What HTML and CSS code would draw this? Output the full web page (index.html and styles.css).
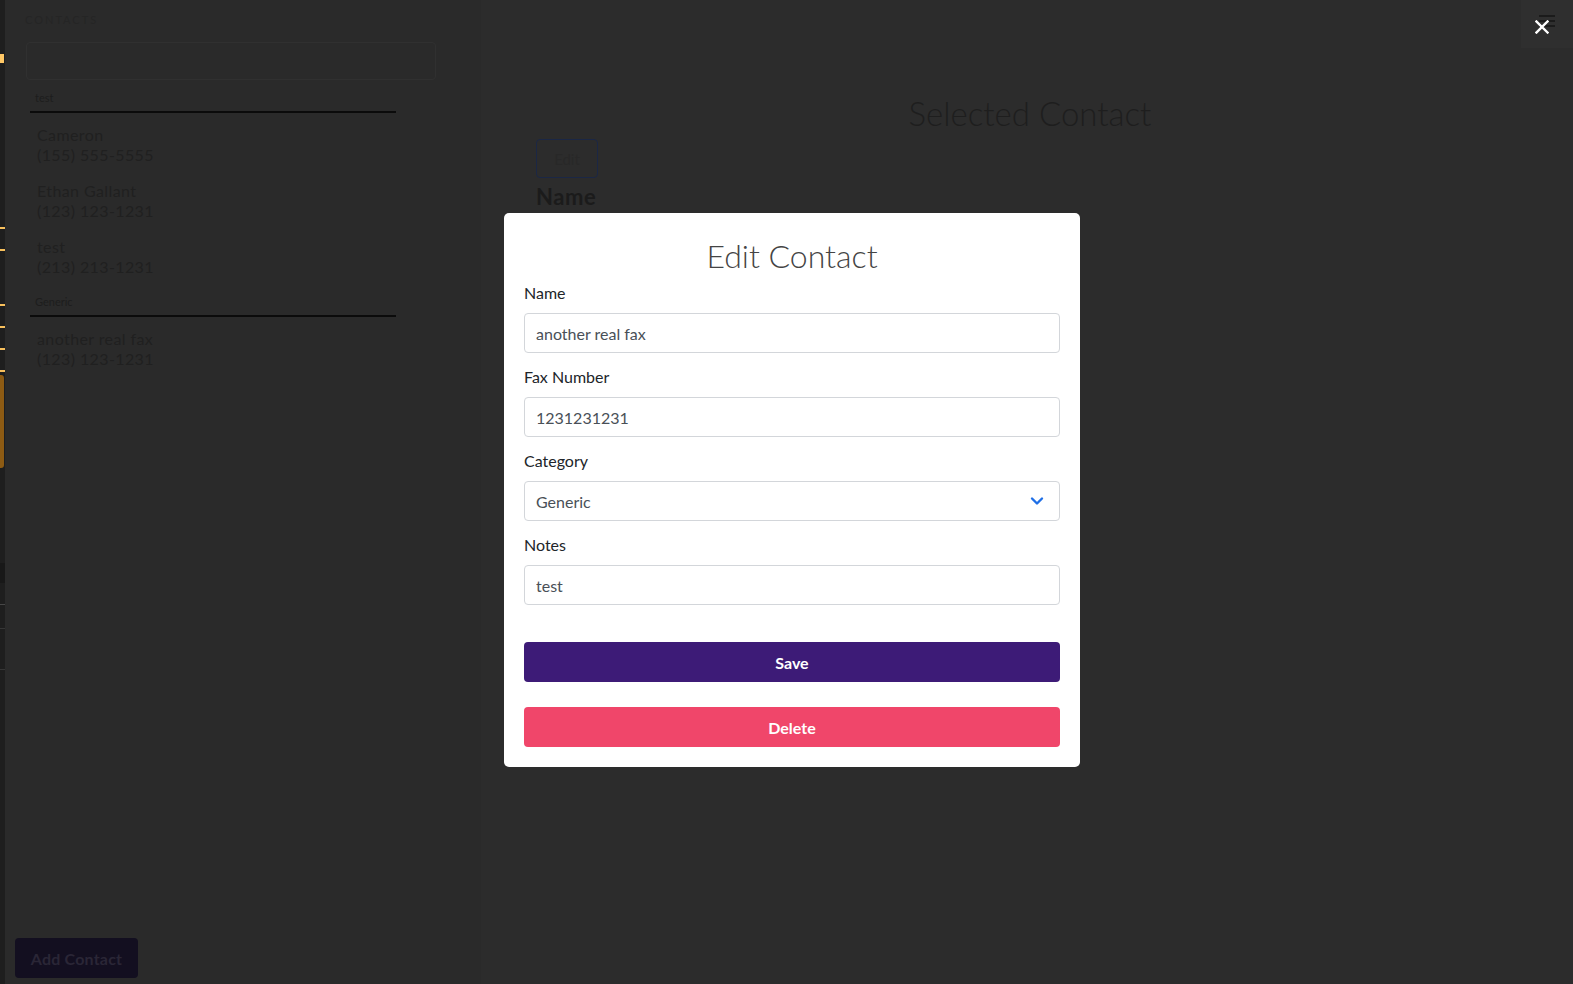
FILE: index.html
```html
<!DOCTYPE html>
<html lang="en">
<head>
<meta charset="utf-8">
<title>Contacts</title>
<link rel="stylesheet" href="styles.css">
</head>
<body>
<div class="app">
  <nav class="rail">
    <span class="mark mark-top"></span>
    <span class="tick tick-1"></span>
    <span class="tick tick-2"></span>
    <span class="tick tick-3"></span>
    <span class="tick tick-2"></span>
    <span class="tick tick-2"></span>
    <span class="tick tick-2"></span>
    <span class="mark-block"></span>
    <span class="band"></span>
    <span class="rule rule-1"></span>
    <span class="rule rule-2"></span>
    <span class="rule rule-3"></span>
  </nav>

  <aside class="sidebar">
    <div class="sidebar-title">CONTACTS</div>
    <div class="search"></div>
    <section class="group">
      <div class="group-label">test</div>
      <ul class="contact-list">
        <li class="contact"><span>Cameron</span><span>(155) 555-5555</span></li>
        <li class="contact"><span>Ethan Gallant</span><span>(123) 123-1231</span></li>
        <li class="contact"><span>test</span><span>(213) 213-1231</span></li>
      </ul>
    </section>
    <section class="group group-next">
      <div class="group-label">Generic</div>
      <ul class="contact-list">
        <li class="contact"><span>another real fax</span><span>(123) 123-1231</span></li>
      </ul>
    </section>
    <button class="add-btn">Add Contact</button>
  </aside>

  <main class="main">
    <div class="topbar">
      <div class="menu-btn"><span></span><span></span><span></span></div>
    </div>
    <h2 class="main-title">Selected Contact</h2>
    <button class="edit-btn">Edit</button>
    <h3 class="field-title">Name</h3>
  </main>
</div>

<div class="overlay">
  <button class="close-btn" aria-label="Close">
    <svg width="14" height="14" viewBox="0 0 14 14"><path d="M1.5 1.5 L12.5 12.5 M12.5 1.5 L1.5 12.5" stroke="#ffffff" stroke-width="2.4" stroke-linecap="square" fill="none"/></svg>
  </button>
  <div class="modal">
    <h2 class="modal-title">Edit Contact</h2>
    <div class="form-group">
      <label class="form-label">Name</label>
      <input class="form-control" type="text" value="another real fax">
    </div>
    <div class="form-group">
      <label class="form-label">Fax Number</label>
      <input class="form-control" type="text" value="1231231231">
    </div>
    <div class="form-group">
      <label class="form-label">Category</label>
      <div class="select-wrap">
        <select class="form-control form-select"><option>Generic</option><option>test</option></select>
        <svg class="chevron" width="14" height="10" viewBox="0 0 14 10"><path d="M2 2.5 L7 7.5 L12 2.5" stroke="#1f6fe6" stroke-width="2.4" fill="none" stroke-linecap="round" stroke-linejoin="round"/></svg>
      </div>
    </div>
    <div class="form-group">
      <label class="form-label">Notes</label>
      <input class="form-control" type="text" value="test">
    </div>
    <button class="btn btn-save">Save</button>
    <button class="btn btn-delete">Delete</button>
  </div>
</div>
</body>
</html>
```

FILE: styles.css
```css
* { box-sizing: border-box; }

html, body {
  margin: 0;
  padding: 0;
  height: 100%;
}

body {
  font-family: Lato, "Open Sans", sans-serif;
  background: #2c2c2c;
  overflow: hidden;
}

.app {
  display: flex;
  height: 984px;
}

/* left rail */
.rail {
  width: 5px;
  flex: none;
  background: #1e1e1e;
  display: flex;
  flex-direction: column;
}
.rail span { display: block; flex: none; }
.mark-top { margin-top: 54px; width: 4px; height: 9px; background: #ffc866; }
.tick { width: 5px; height: 2px; background: #f7bf5c; }
.tick-1 { margin-top: 164px; }
.tick-2 { margin-top: 20px; }
.tick-3 { margin-top: 53px; }
.mark-block { margin-top: 3px; width: 4px; height: 93px; background: #8d5b13; border-radius: 0 3px 3px 0; }
.band { margin-top: 95px; width: 5px; height: 20px; background: #181818; }
.rule { width: 5px; height: 1px; background: #474747; }
.rule-1 { margin-top: 21px; }
.rule-2 { margin-top: 23px; background: #363636; }
.rule-3 { margin-top: 40px; background: #363636; }

/* sidebar */
.sidebar {
  width: 476px;
  flex: none;
  background: #2a2a2a;
  display: flex;
  flex-direction: column;
  padding: 12px 0 6px 0;
}
.sidebar-title {
  margin-left: 20px;
  font-size: 11px;
  line-height: 16px;
  letter-spacing: 2px;
  color: #252525;
}
.search {
  margin: 14px 0 0 21px;
  width: 410px;
  height: 38px;
  border: 1px solid #303030;
  border-radius: 4px;
}
.group {
  margin: 11px 0 0 25px;
  width: 366px;
}
.group-next { margin-top: 10px; }
.group-label {
  font-size: 11px;
  line-height: 14px;
  padding: 0 0 6px 5px;
  color: #1d1d1d;
  border-bottom: 2px solid #0b0b0b;
}
.contact-list {
  list-style: none;
  margin: 0;
  padding: 4px 0 0 0;
}
.contact {
  display: flex;
  flex-direction: column;
  padding: 8px 7px;
  font-size: 16px;
  line-height: 20px;
  letter-spacing: 0.4px;
  color: #202020;
}
.add-btn {
  margin: auto 0 0 10px;
  width: 123px;
  height: 40px;
  border: none;
  border-radius: 4px;
  background: #130f20;
  color: #2a2636;
  font-family: Lato, sans-serif;
  font-size: 16px;
  font-weight: 700;
  letter-spacing: 0.2px;
}

/* main */
.main {
  flex: 1;
  background: #2c2c2c;
  display: flex;
  flex-direction: column;
  align-items: flex-start;
  padding: 0 55px;
}
.topbar {
  align-self: stretch;
  margin-right: -55px;
  height: 48px;
  display: flex;
  justify-content: flex-end;
}
.menu-btn {
  width: 52px;
  height: 48px;
  background: #2f2f2f;
  display: flex;
  flex-direction: column;
  align-items: flex-start;
  padding: 15px 0 0 18px;
  gap: 3px;
}
.menu-btn span {
  display: block;
  width: 16px;
  height: 2px;
  background: #1b1b1b;
}
.main-title {
  align-self: stretch;
  margin: 46px 0 0 0;
  padding-left: 6px;
  text-align: center;
  font-size: 33px;
  line-height: 38px;
  font-weight: 300;
  color: #1e1e1e;
}
.edit-btn {
  margin-top: 7px;
  width: 62px;
  height: 39px;
  border: 1px solid #1b2745;
  border-radius: 4px;
  background: transparent;
  color: #282828;
  font-family: Lato, sans-serif;
  font-size: 15px;
}
.field-title {
  margin: 6px 0 0 0;
  font-size: 22px;
  line-height: 26px;
  font-weight: 700;
  letter-spacing: 0.6px;
  color: #1b1b1b;
}

/* overlay + modal */
.overlay {
  position: fixed;
  inset: 0;
  display: flex;
  justify-content: center;
  align-items: flex-start;
  padding: 213px 0 0 11px;
}
.close-btn {
  position: absolute;
  top: 20px;
  right: 24px;
  width: 14px;
  height: 14px;
  padding: 0;
  border: none;
  background: transparent;
  display: flex;
}
.modal {
  width: 576px;
  background: #ffffff;
  border-radius: 5px;
  padding: 24px 20px 20px;
  display: flex;
  flex-direction: column;
}
.modal-title {
  margin: 0 0 6px 0;
  text-align: center;
  font-size: 32px;
  line-height: 38px;
  font-weight: 300;
  color: #444444;
}
.form-group {
  display: flex;
  flex-direction: column;
  margin-bottom: 12px;
}
.form-label {
  font-size: 16px;
  line-height: 24px;
  color: #212529;
  margin-bottom: 8px;
}
.form-control {
  width: 100%;
  height: 40px;
  border: 1px solid #d3d6da;
  border-radius: 4px;
  padding: 0 11px;
  font-family: Lato, sans-serif;
  font-size: 16px;
  color: #495057;
  background: #ffffff;
  outline: none;
}
.select-wrap { position: relative; }
.form-select {
  appearance: none;
  -webkit-appearance: none;
}
.chevron {
  position: absolute;
  right: 16px;
  top: 15px;
  pointer-events: none;
}
.btn {
  height: 40px;
  border: none;
  border-radius: 4px;
  color: #ffffff;
  font-family: Lato, sans-serif;
  font-size: 16px;
  font-weight: 700;
}
.btn-save { margin-top: 25px; background: #3d1b77; }
.btn-delete { margin-top: 25px; background: #f0466a; }
```
